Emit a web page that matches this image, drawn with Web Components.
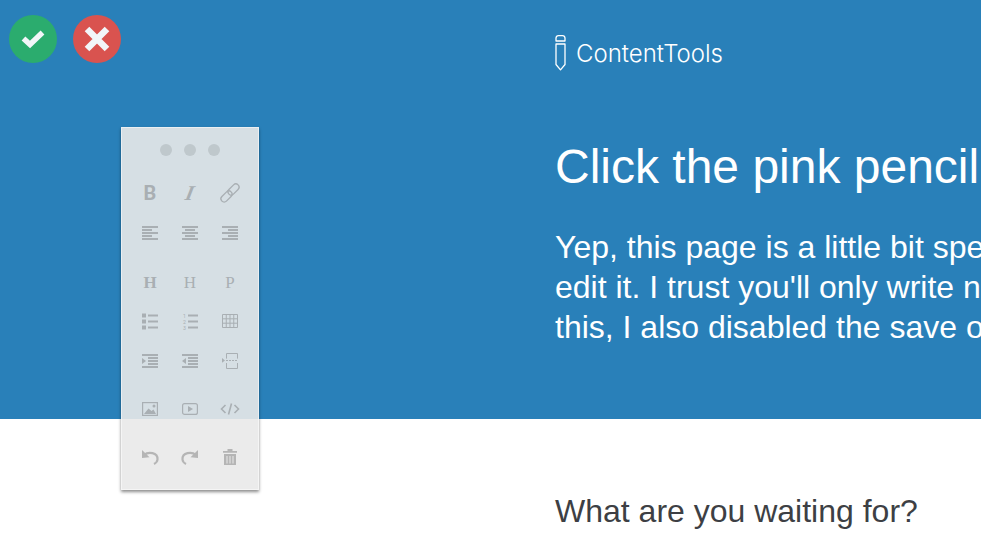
<!DOCTYPE html>
<html lang="en"><head><meta charset="utf-8"><title>ContentTools</title>
<style>
html,body{margin:0;padding:0;height:100%;overflow:hidden;background:#fff;font-family:"Liberation Sans",Arial,sans-serif}
</style></head><body>
<ct-page>
  <ct-hero slot="hero">
    <ct-logo>ContentTools</ct-logo>
    <h1 slot="title">Click the pink pencil</h1>
    <div slot="lead">Yep, this page is a little bit spe<br>edit it. I trust you'll only write n<br>this, I also disabled the save o</div>
  </ct-hero>
  <ct-section>What are you waiting for?</ct-section>
  <ct-ignition slot="overlay"></ct-ignition>
  <ct-toolbox slot="overlay"></ct-toolbox>
</ct-page>
<script>
function shadow(el,html){el.attachShadow({mode:'open'}).innerHTML=html}
customElements.define('ct-page',class extends HTMLElement{constructor(){super();shadow(this,`<style>
:host{display:block;position:relative;width:981px;height:539px;overflow:hidden}
</style><slot name="hero"></slot><slot></slot><slot name="overlay"></slot>`)}});
customElements.define('ct-hero',class extends HTMLElement{constructor(){super();shadow(this,`<style>
:host{display:block;height:419px;background:#2980b9;color:#fff;padding:35px 0 0 555px;box-sizing:border-box;white-space:nowrap;overflow:hidden}
::slotted(h1){margin:65px 0 0;font:400 48px/62px "Liberation Sans",Arial,sans-serif}
::slotted(div){margin-top:29px;font:400 32px/40px "Liberation Sans",Arial,sans-serif}
</style><slot></slot><slot name="title"></slot><slot name="lead"></slot>`)}});
customElements.define('ct-logo',class extends HTMLElement{constructor(){super();shadow(this,`<style>
:host{display:flex;align-items:center;gap:10px;height:36px;font:300 24px/36px "Inter","Open Sans",sans-serif;color:#fff}
svg{display:block;flex:none}
span{padding-top:2px}
</style><svg width="11" height="36" viewBox="0 0 11 36" fill="none" stroke="#fff" stroke-width="1.300" stroke-linejoin="round"><path d="M1 6V3a2.500 2.500 0 0 1 2.500-2.300h4A2.500 2.500 0 0 1 10 3v3z"/><path d="M1 9h9v20.500L5.500 34.800 1 29.500z"/></svg><span><slot></slot></span>`)}});
customElements.define('ct-section',class extends HTMLElement{constructor(){super();shadow(this,`<style>
:host{display:block;padding:71px 0 0 555px;font:400 32px/42px "Liberation Sans",Arial,sans-serif;color:#3d3f44;white-space:nowrap}
</style><slot></slot>`)}});
customElements.define('ct-ignition',class extends HTMLElement{constructor(){super();shadow(this,`<style>
:host{position:absolute;left:9px;top:15px;display:flex;gap:16px}
.b{width:48px;height:48px;border-radius:50%;display:flex;align-items:center;justify-content:center}
.ok{background:#2bac6e}.no{background:#d9534f}
</style>
<div class="b ok"><svg width="26" height="22" viewBox="0 0 26 22"><path d="M3.500 10.500L10 16.500 22.500 4.500" fill="none" stroke="#f2f6f9" stroke-width="5.500"/></svg></div>
<div class="b no"><svg width="28" height="28" viewBox="0 0 28 28"><path d="M4 4l20 20M24 4L4 24" fill="none" stroke="#f2f6f9" stroke-width="6.500"/></svg></div>`)}});
const C='#a9afb3';
const bars=(rows)=>`<path d="${rows.map(([x,y,w])=>`M${x} ${y}h${w}v2h-${w}z`).join('')}" fill="${C}"/>`;
const I={
bold:`<text x="12" y="19" text-anchor="middle" font-family="Roboto,Liberation Sans" font-weight="700" font-size="20" fill="${C}">B</text>`,
italic:`<text x="14.500" y="19" text-anchor="middle" transform="skewX(-12)" font-family="Liberation Serif" font-style="italic" font-weight="700" font-size="21" fill="${C}">I</text>`,
link:`<g fill="none" stroke="${C}" stroke-width="1.300"><rect x="9" y="5.300" width="13" height="6.400" rx="3.200" transform="rotate(-45 15.500 8.500)"/><rect x="2" y="12.300" width="13" height="6.400" rx="3.200" transform="rotate(-45 8.500 15.500)"/></g>`,
left:bars([[4,5,16],[4,8,10],[4,11,16],[4,14,10],[4,17,16]]),
center:bars([[4,5,16],[7,8,10],[4,11,16],[7,14,10],[4,17,16]]),
right:bars([[4,5,16],[10,8,10],[4,11,16],[10,14,10],[4,17,16]]),
h1:`<text x="12" y="18" text-anchor="middle" font-family="Liberation Serif" font-weight="700" font-size="17" fill="${C}">H</text>`,
h2:`<text x="12" y="18" text-anchor="middle" font-family="Liberation Serif" font-size="17" fill="${C}">H</text>`,
p:`<text x="12" y="18" text-anchor="middle" font-family="Liberation Serif" font-size="17" fill="${C}">P</text>`,
ul:`<path d="M4 3.500h4v4H4zM4 9.500h4v4H4zM4 15.500h4v4H4z" fill="${C}"/>`+bars([[10,4.500,10],[10,10.500,10],[10,16.500,10]]),
ol:bars([[10,4.500,10],[10,10.500,10],[10,16.500,10]])+`<g font-family="Roboto,Liberation Sans" font-size="5.200" fill="${C}" text-anchor="middle"><text x="6.500" y="7.500">1</text><text x="6.500" y="13.500">2</text><text x="6.500" y="19.500">3</text></g>`,
table:`<path d="M4.500 4.500h15v13h-15zM4.500 8.800h15M4.500 13.200h15M8.250 4.500v13M12 4.500v13M15.750 4.500v13" fill="none" stroke="${C}" stroke-width="1"/>`,
ind:bars([[4,4,16],[10,7,10],[10,10,10],[10,13,10],[4,16,16]])+`<path d="M4 8l4 3-4 3z" fill="${C}"/>`,
unind:bars([[4,4,16],[10,7,10],[10,10,10],[10,13,10],[4,16,16]])+`<path d="M8 8l-4 3 4 3z" fill="${C}"/>`,
brk:`<path d="M4 8l3 2.400-3 2.400z" fill="${C}"/><path d="M8.500 8.600V3.500h11v5.100M8.500 13v5.500h11V13" fill="none" stroke="${C}" stroke-width="1"/><path d="M8 10.500h12" fill="none" stroke="${C}" stroke-width="1" stroke-dasharray="2 1"/>`,
img:`<rect x="4.600" y="5.600" width="14.800" height="12.800" fill="none" stroke="${C}" stroke-width="1.200"/><path d="M6 17l4.500-5.500 3 2.500 2-1.500 2.500 4.500z" fill="${C}"/><circle cx="16" cy="9" r="1.500" fill="${C}"/>`,
video:`<rect x="4.600" y="6.600" width="14.800" height="10.800" rx="2" fill="none" stroke="${C}" stroke-width="1.200"/><path d="M10 9l5 3-5 3z" fill="${C}"/>`,
code:`<path d="M7.500 8l-4 4 4 4M16.500 8l4 4-4 4M13.500 6.500l-3 11" fill="none" stroke="${C}" stroke-width="1.600"/>`,
undo:`<path d="M6 10C10 6.500 20 7 19.500 14.500 19.300 16.500 18 18 16 19" fill="none" stroke="#b5b5b5" stroke-width="2.200"/><path d="M4 5v8l7.500-.8z" fill="#b5b5b5"/>`,
redo:`<path d="M18 10C14 6.500 4 7 4.500 14.500 4.700 16.500 6 18 8 19" fill="none" stroke="#b5b5b5" stroke-width="2.200"/><path d="M20 5v8l-7.500-.8z" fill="#b5b5b5"/>`,
trash:`<path d="M5 6h14v1.800H5zM9.500 4h5v2h-5zM6 9h12v11H6z" fill="#b5b5b5"/><path d="M9 11v7.500M12 11v7.500M15 11v7.500" stroke="#e9e9e9" stroke-width="1"/>`
};
customElements.define('ct-tool',class extends HTMLElement{constructor(){super();shadow(this,`<style>
:host{display:flex;align-items:center;justify-content:center;width:40px;height:40px}
svg{display:block}</style><svg width="24" height="24" viewBox="0 0 24 24">${I[this.getAttribute('icon')]||''}</svg>`)}});
customElements.define('ct-toolbox',class extends HTMLElement{constructor(){super();
const row=(a)=>a.map(n=>`<ct-tool icon="${n}"></ct-tool>`).join('');
const grp=(rows,m)=>`<div class="g" style="margin-top:${m}px">${rows.map(row).join('')}</div>`;
shadow(this,`<style>
:host{position:absolute;left:121px;top:127px;width:138px;height:363px;box-sizing:border-box;background:rgba(233,233,233,.9);border:1px solid rgba(255,255,255,.5);box-shadow:0 2px 3px rgba(0,0,0,.45);display:flex;flex-direction:column;align-items:center}
.grip{display:flex;gap:12px;margin-top:16px}
.grip i{width:12px;height:12px;border-radius:50%;background:#bfc8cc}
.g{display:grid;grid-template-columns:repeat(3,40px)}
</style><div class="grip"><i></i><i></i><i></i></div>
${grp([['bold','italic','link'],['left','center','right']],17)}
${grp([['h1','h2','p'],['ul','ol','table'],['ind','unind','brk']],9)}
${grp([['img','video','code']],7)}
${grp([['undo','redo','trash']],8)}`)}});
</script>
</body></html>
